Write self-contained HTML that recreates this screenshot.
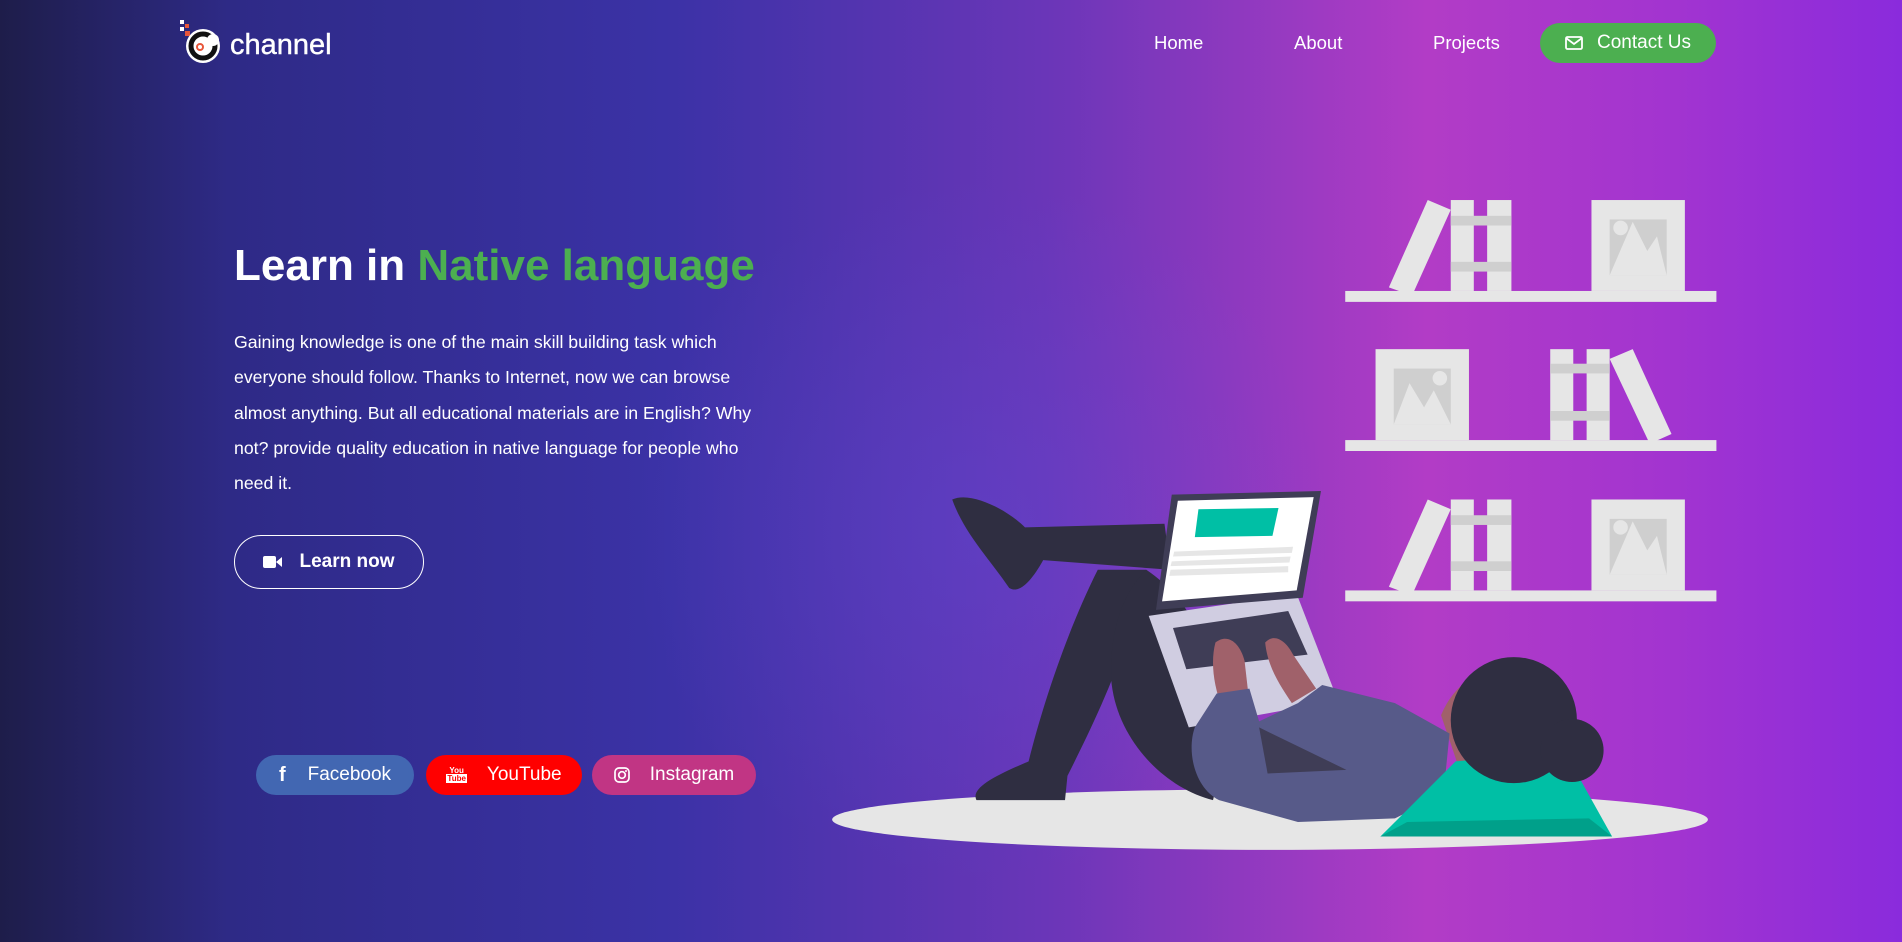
<!DOCTYPE html>
<html><head><meta charset="utf-8">
<style>
*{margin:0;padding:0;box-sizing:border-box}
html,body{width:1902px;height:942px;overflow:hidden}
body{font-family:"Liberation Sans",sans-serif;color:#fff;position:relative;
background:linear-gradient(90deg,#1e1d4a 0%,#2e2a86 12%,#3b32a6 35%,#6a36b8 55%,#b23cc6 75%,#a234d0 88%,#8a2bdc 100%);}
.glow{position:absolute;left:600px;top:150px;width:760px;height:760px;border-radius:50%;background:radial-gradient(circle,rgba(90,80,220,.3),rgba(0,0,0,0) 65%)}
.a{position:absolute}
.nav a{position:absolute;top:32px;font-size:18.5px;color:#fff;text-decoration:none}
h1{position:absolute;left:234px;top:240px;font-size:44px;font-weight:bold;line-height:52px;white-space:nowrap}
h1 span{color:#4caf50}
p.d{position:absolute;left:234px;top:325px;width:530px;font-size:17.7px;line-height:35.3px}
.btn{position:absolute;border-radius:30px;display:flex;align-items:center;justify-content:center;font-size:19px;color:#fff}
</style></head><body>
<div class="glow"></div>
<svg class="a" style="left:178px;top:18px" width="48" height="48" viewBox="0 0 48 48">
<rect x="2" y="2" width="4" height="4" fill="#fff"/><rect x="7" y="6" width="4" height="4" fill="#e8563a"/><rect x="2" y="9" width="4" height="4" fill="#fff"/><rect x="7" y="13" width="5" height="5" fill="#e8563a"/>
<circle cx="25" cy="28" r="17" fill="#fff"/><circle cx="25" cy="28" r="12" fill="none" stroke="#111" stroke-width="5"/>
<circle cx="35" cy="22" r="6" fill="#fff"/><circle cx="22" cy="29" r="3" fill="none" stroke="#e8563a" stroke-width="2"/></svg>
<div class="a" style="left:230px;top:29px;font-size:29px;-webkit-text-stroke:0.4px #fff">channel</div>
<div class="nav"><a style="left:1154px">Home</a><a style="left:1294px">About</a><a style="left:1433px">Projects</a></div>
<div class="btn" style="left:1540px;top:23px;width:176px;height:40px;background:#4caf50;gap:14px;font-size:19px">
<svg width="18" height="14" viewBox="0 0 18 14"><rect x="1" y="1" width="16" height="12" rx="1.5" fill="none" stroke="#fff" stroke-width="1.8"/><path d="M1 2l8 6 8-6" fill="none" stroke="#fff" stroke-width="1.8"/></svg>Contact Us</div>
<h1>Learn in <span>Native language</span></h1>
<p class="d">Gaining knowledge is one of the main skill building task which everyone should follow. Thanks to Internet, now we can browse almost anything. But all educational materials are in English? Why not? provide quality education in native language for people who need it.</p>
<div class="btn" style="left:234px;top:535px;width:190px;height:54px;border:1.5px solid #fff;font-weight:bold;gap:16px">
<svg width="20" height="14" viewBox="0 0 20 14"><rect x="0" y="1" width="13" height="12" rx="2" fill="#fff"/><path d="M13 7l6-5v10z" fill="#fff"/></svg>Learn now</div>
<div class="btn" style="left:256px;top:755px;width:158px;height:40px;background:#4267b2;gap:22px"><b style="font-size:20px;font-family:'Liberation Sans'">f</b>Facebook</div>
<div class="btn" style="left:426px;top:755px;width:156px;height:40px;background:#ff0000;gap:20px"><span style="font-size:8px;line-height:8px;font-weight:bold;text-align:center;display:inline-block">You<br><span style="background:#fff;color:#f00;padding:0 1px">Tube</span></span>YouTube</div>
<div class="btn" style="left:592px;top:755px;width:164px;height:40px;background:#c13584;gap:20px"><svg width="16" height="16" viewBox="0 0 16 16"><rect x="1" y="1" width="14" height="14" rx="4" fill="none" stroke="#fff" stroke-width="1.7"/><circle cx="8" cy="8" r="3.3" fill="none" stroke="#fff" stroke-width="1.7"/><circle cx="12" cy="4" r="1" fill="#fff"/></svg>Instagram</div>
<svg class="a" style="left:0;top:0" width="1902" height="942" viewBox="0 0 1568 777" preserveAspectRatio="none">
<g fill="#e6e6e6">
<rect x="1109" y="240" width="306" height="9"/>
<polygon points="1145,237 1177,165 1196,173 1164,244"/>
<rect x="1196" y="165" width="19" height="75"/><rect x="1226" y="165" width="20" height="75"/>
<rect x="1312" y="165" width="77" height="75"/>
<rect x="1109" y="363" width="306" height="9"/>
<rect x="1134" y="288" width="77" height="75"/>
<rect x="1278" y="288" width="19" height="75"/><rect x="1308" y="288" width="19" height="75"/>
<polygon points="1327,296 1346,288 1378,358 1360,366"/>
<rect x="1109" y="487" width="306" height="9"/>
<polygon points="1145,484 1177,412 1196,420 1164,491"/>
<rect x="1196" y="412" width="19" height="75"/><rect x="1226" y="412" width="20" height="75"/>
<rect x="1312" y="412" width="77" height="75"/>
<ellipse cx="1047" cy="676" rx="361" ry="25"/>
</g>
<g fill="#cfcfcf">
<rect x="1196" y="178" width="50" height="8"/><rect x="1196" y="216" width="50" height="8"/>
<rect x="1196" y="425" width="50" height="8"/><rect x="1196" y="463" width="50" height="8"/>
<rect x="1278" y="300" width="49" height="8"/><rect x="1278" y="339" width="49" height="8"/>
<rect x="1327" y="181" width="47" height="46"/><rect x="1149" y="304" width="47" height="46"/><rect x="1327" y="428" width="47" height="46"/>
</g>
<g fill="#e6e6e6">
<polygon points="1327,227 1346,183 1358,207 1366,195 1374,227"/><circle cx="1336" cy="188" r="6"/>
<polygon points="1149,350 1162,316 1174,336 1182,322 1196,350"/><circle cx="1187" cy="312" r="6"/>
<polygon points="1327,474 1346,430 1358,454 1366,442 1374,474"/><circle cx="1336" cy="435" r="6"/>
</g>
<g fill="#2f2e41">
<path d="M785,412 C800,405 830,420 845,435 L960,432 L965,470 L860,462 C850,480 840,490 832,485 C815,460 795,440 785,412Z"/>
<path d="M905,470 L945,470 C930,540 900,600 880,640 L878,660 L805,660 C800,650 820,640 848,628 C860,580 880,520 905,470Z"/>
<path d="M945,470 C990,500 1010,560 1010,620 L1000,660 C960,650 920,610 916,560 C915,520 925,490 945,470Z"/>
</g>
<polygon points="947,508 1069,490 1103,578 980,600" fill="#d0cde1"/>
<polygon points="967,518 1062,504 1078,540 978,552" fill="#3f3d56"/>
<polygon points="966,408 1089,405 1074,493 953,503" fill="#3f3d56"/>
<polygon points="971,413 1083,410 1069,487 958,496" fill="#fff"/>
<polygon points="988,420 1054,419 1049,442 985,443" fill="#00bfa5"/>
<g fill="#e6e6e6"><polygon points="968,455 1066,451 1065,456 967,459"/><polygon points="966,463 1064,459 1063,464 965,467"/><polygon points="965,470 1062,467 1062,472 964,475"/></g>
<g fill="#a0616a">
<path d="M1002,530 C1012,522 1022,530 1026,545 L1030,580 L1008,585 C1000,565 998,545 1002,530Z"/>
<path d="M1043,530 C1050,522 1060,528 1066,540 L1085,568 L1065,580 C1055,565 1045,550 1043,530Z"/>
<path d="M1188,590 C1200,560 1230,545 1250,550 L1245,640 L1205,640Z"/>
</g>
<path d="M1003,572 L1030,568 L1038,595 L1070,580 L1090,565 L1150,580 L1195,605 L1190,655 L1150,675 L1070,678 L1005,660 C985,650 978,620 985,600Z" fill="#575a89"/>
<path d="M1038,600 L1045,638 L1110,635 Z" fill="#3f3d56"/>
<path d="M1138,690 L1200,628 L1290,620 L1329,690 Z" fill="#00bfa5"/>
<path d="M1138,690 L1160,678 L1310,675 L1329,690 Z" fill="#00a08a"/>
<circle cx="1248" cy="594" r="52" fill="#2f2e41"/>
<circle cx="1296" cy="619" r="26" fill="#2f2e41"/>
</svg>
</body></html>
